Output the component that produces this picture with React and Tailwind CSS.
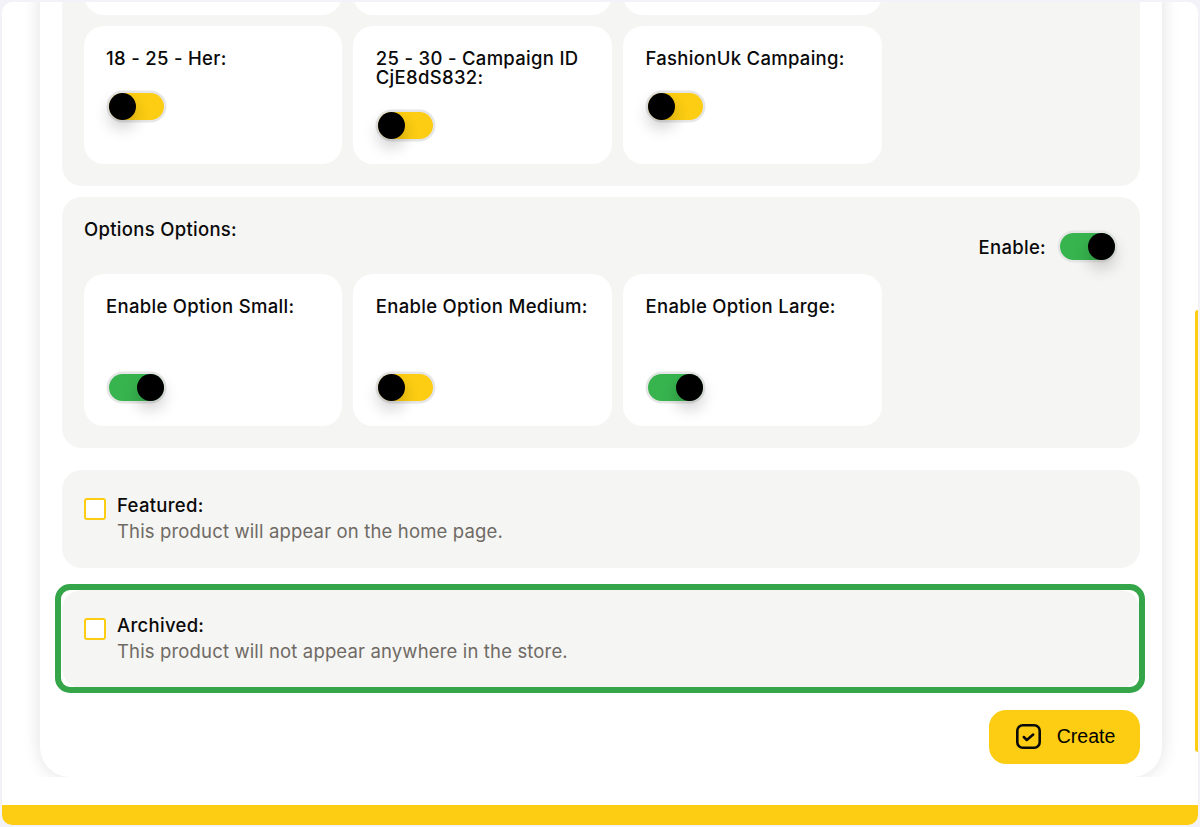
import React from "react";

const font = { fontFamily: '"Inter", "Liberation Sans", sans-serif' };

function Toggle({ on }) {
  return (
    <div className={`relative h-[27px] w-[55px] rounded-full ring-[2.5px] ring-[#e6e6e6] ${on ? "bg-[#37b44e]" : "bg-[#fccd12]"}`}>
      <div className={`absolute top-0 h-[27px] w-[27px] rounded-full bg-black shadow-[0_8px_16px_rgba(0,0,0,0.2)] ${on ? "right-0" : "left-0"}`} />
    </div>
  );
}

const titleClass = "text-[18.5px] leading-[19px] font-medium tracking-[0.3px] text-[#0a0a0a]";

function OptionCard({ title, on, height = "h-[138px]", gap = "mt-[25px]" }) {
  return (
    <div className={`${height} rounded-[20px] bg-white pl-[22.5px] pr-4 pt-[23px]`}>
      <div className={titleClass}>{title}</div>
      <div className={`${gap} ml-[2.5px]`}>
        <Toggle on={on} />
      </div>
    </div>
  );
}

function CheckPanel({ title, text }) {
  return (
    <div className="flex h-[98px] items-start rounded-[20px] bg-[#f5f5f3] pl-[22px] pt-[25px]">
      <div className="mt-[3px] h-[21.5px] w-[21.5px] rounded-[3px] border-2 border-[#fccd12] bg-white" />
      <div className="ml-[11.5px]">
        <div className={titleClass + " leading-[20px]"}>{title}</div>
        <div className="mt-[6px] text-[18.5px] leading-[20px] tracking-[0.15px] text-[#6f6a64]">{text}</div>
      </div>
    </div>
  );
}

export default function App() {
  return (
    <div className="relative h-[827px] w-[1200px] overflow-hidden bg-[#f3f2f8]" style={font}>
      <div className="relative ml-[2px] mt-[2px] flex h-[823px] w-[1196px] flex-col overflow-hidden rounded-[10px] bg-white">
        <div className="h-[775px] overflow-hidden">
          <div className="-mt-[60px] ml-[38px] w-[1122px] rounded-b-[30px] bg-white px-[22px] pb-[13px] pt-[1px] shadow-[0_0_18px_rgba(0,0,0,0.12)]">
            <div className="rounded-[20px] bg-[#f5f5f3] pb-[22px] pl-[21.5px] pt-0">
              <div className="grid grid-cols-[repeat(3,258.75px)] gap-[11px]">
                <div className="h-[72px] rounded-[20px] bg-white" />
                <div className="h-[72px] rounded-[20px] bg-white" />
                <div className="h-[72px] rounded-[20px] bg-white" />
                <OptionCard title="18 - 25 - Her:" />
                <OptionCard title="25 - 30 - Campaign ID CjE8dS832:" />
                <OptionCard title="FashionUk Campaing:" />
              </div>
            </div>

            <div className="mt-[11px] rounded-[20px] bg-[#f5f5f3] pb-[22px] pl-[21.5px] pr-[22px] pt-[23px]">
              <div className="flex h-[54px] items-start justify-between">
                <div className={`${titleClass} ml-[0.5px]`}>Options Options:</div>
                <div className="mr-[3px] mt-[13px] flex items-center gap-[14px]">
                  <span className="translate-y-[1px] text-[18.5px] leading-[27px] font-medium tracking-[0.3px] text-[#0a0a0a]">Enable:</span>
                  <Toggle on />
                </div>
              </div>
              <div className="grid grid-cols-[repeat(3,258.75px)] gap-[11px]">
                <OptionCard title="Enable Option Small:" on height="h-[152px]" gap="mt-[58px]" />
                <OptionCard title="Enable Option Medium:" height="h-[152px]" gap="mt-[58px]" />
                <OptionCard title="Enable Option Large:" on height="h-[152px]" gap="mt-[58px]" />
              </div>
            </div>

            <div className="mt-[22px]">
              <CheckPanel title="Featured:" text="This product will appear on the home page." />
            </div>

            <div className="relative mt-[22px]">
              <div className="relative">
                <CheckPanel title="Archived:" text="This product will not appear anywhere in the store." />
              </div>
              <div className="absolute -bottom-[5px] -left-[7px] -right-[5px] -top-[6px] rounded-[15px] border-[6px] border-[#34a549]" />
            </div>

            <div className="mt-[21.5px] flex justify-end">
              <button className="flex h-[54.5px] w-[151px] items-center justify-center gap-[16px] rounded-[17px] bg-[#fccd12] pl-[2px] text-[19.5px] text-black" style={{ fontFamily: '"Liberation Sans", Arial, sans-serif' }}>
                <svg width="25" height="25" viewBox="0 0 25 25" fill="none">
                  <rect x="1.3" y="1.3" width="22.4" height="22.4" rx="5.5" stroke="#0a0a0a" strokeWidth="2.6" />
                  <path d="M7.8 13l3 3 6.4-5.5" stroke="#0a0a0a" strokeWidth="2.5" strokeLinecap="round" strokeLinejoin="round" />
                </svg>
                <span>Create</span>
              </button>
            </div>
          </div>
        </div>
        <div className="mt-[28px] h-[20px] bg-[#fccd12]" />
        <div className="absolute right-0 top-[308px] h-[442px] w-[3px] rounded-l-[4px] bg-[#fccd12]" />
      </div>
    </div>
  );
}
